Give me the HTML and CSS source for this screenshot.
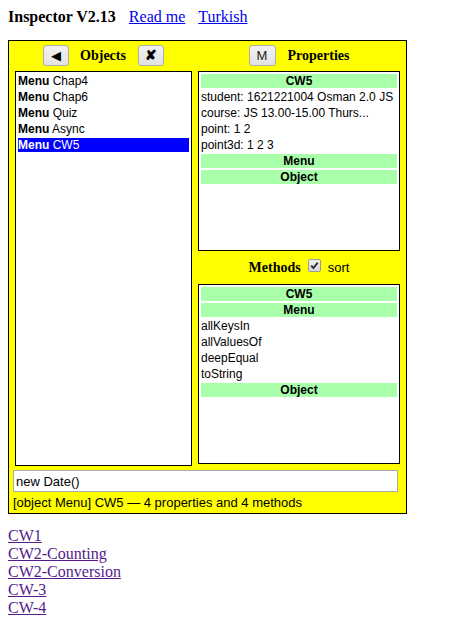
FILE: index.html
```html
<!DOCTYPE html>
<html>
<head>
<meta charset="utf-8">
<title>Inspector</title>
<link rel="stylesheet" href="styles.css">
</head>
<body>
<div class="title"><b>Inspector V2.13</b><a class="toplink" href="#">Read me</a><a class="toplink" href="#">Turkish</a></div>
<div class="inspector">
  <div class="cols">
    <div class="col">
      <div class="head">
        <button class="btn">&#9664;</button>
        <span class="htext">Objects</span>
        <button class="btn btn-x">&#10008;</button>
      </div>
      <div class="list objects">
        <div class="row"><b>Menu</b> Chap4</div>
        <div class="row"><b>Menu</b> Chap6</div>
        <div class="row"><b>Menu</b> Quiz</div>
        <div class="row"><b>Menu</b> Async</div>
        <div class="row selected"><b>Menu</b> CW5</div>
      </div>
    </div>
    <div class="col">
      <div class="head">
        <button class="btn btn-m">M</button>
        <span class="htext">Properties</span>
      </div>
      <div class="list panel">
        <div class="bar">CW5</div>
        <div class="row">student: 1621221004 Osman 2.0 JS</div>
        <div class="row">course: JS 13.00-15.00 Thurs...</div>
        <div class="row">point: 1 2</div>
        <div class="row">point3d: 1 2 3</div>
        <div class="bar">Menu</div>
        <div class="bar">Object</div>
      </div>
      <div class="head methods-head">
        <span class="htext">Methods</span>
        <span class="check"><svg width="9" height="9" viewBox="0 0 9 9"><path d="M1.2 4.6 L3.4 7 L7.8 1.6" fill="none" stroke="#333" stroke-width="1.9"/></svg></span>
        <span class="sort">sort</span>
      </div>
      <div class="list panel">
        <div class="bar">CW5</div>
        <div class="bar">Menu</div>
        <div class="row">allKeysIn</div>
        <div class="row">allValuesOf</div>
        <div class="row">deepEqual</div>
        <div class="row">toString</div>
        <div class="bar">Object</div>
      </div>
    </div>
  </div>
  <input class="cmd" type="text" value="new Date()">
  <div class="status">[object Menu] CW5 — 4 properties and 4 methods</div>
</div>
<div class="links">
  <a href="#">CW1</a>
  <a href="#">CW2-Counting</a>
  <a href="#">CW2-Conversion</a>
  <a href="#">CW-3</a>
  <a href="#">CW-4</a>
</div>
</body>
</html>
```

FILE: styles.css
```css
body {
  margin: 8px;
  font-family: "Liberation Serif", "Times New Roman", serif;
  font-size: 16px;
  color: #000;
  background: #fff;
}

.title {
  line-height: 18px;
  margin-bottom: 14px;
}

.toplink {
  color: #0000ee;
  margin-left: 13px;
}

.inspector {
  width: 399px;
  box-sizing: border-box;
  border: 1px solid #000;
  background: #ffff00;
  padding: 0 6px;
}

.cols {
  display: grid;
  grid-template-columns: 177px 202px;
  column-gap: 6px;
  align-items: start;
}

.col {
  display: flex;
  flex-direction: column;
}

.head {
  height: 30px;
  display: flex;
  align-items: center;
  justify-content: center;
  gap: 11px;
}

.htext {
  font-weight: bold;
  font-size: 14px;
}

.btn {
  font-family: "Liberation Sans", Arial, sans-serif;
  font-size: 13px;
  width: 26px;
  height: 21px;
  padding: 0;
  border: 1px solid #adadad;
  border-radius: 3px;
  background: linear-gradient(#f2f2f2, #e2e2e2);
  color: #000;
  line-height: 19px;
  margin-top: -1px;
}

.btn-x {
  font-weight: bold;
  font-size: 14px;
  margin-left: 1px;
}

.btn-m {
  width: 27px;
  color: #222;
  margin-right: 1px;
}

.list {
  box-sizing: border-box;
  border: 1px solid #000;
  background: #fff;
  padding: 2px 2px 1px;
  display: flex;
  flex-direction: column;
  gap: 2px;
  font-family: "Liberation Sans", Arial, sans-serif;
  font-size: 12px;
}

.objects {
  height: 395px;
}

.panel {
  height: 180px;
}

.row {
  height: 14px;
  line-height: 14px;
  white-space: nowrap;
  overflow: hidden;
}

.row b {
  font-weight: bold;
}

.selected {
  background: #0000ff;
  color: #fff;
}

.bar {
  height: 14px;
  line-height: 14px;
  background: #aaffaa;
  font-weight: bold;
  text-align: center;
}

.methods-head {
  height: 33px;
  gap: 0;
}

.check {
  display: inline-flex;
  align-items: center;
  justify-content: center;
  width: 11px;
  height: 11px;
  border: 1px solid #9a9a9a;
  border-radius: 2px;
  background: linear-gradient(#f0f0f0, #d6d6d6);
  margin-left: 7px;
  margin-top: -4px;
}

.sort {
  font-family: "Liberation Sans", Arial, sans-serif;
  font-size: 13px;
  margin-left: 7px;
}

.cmd {
  display: block;
  box-sizing: border-box;
  width: 385px;
  height: 22px;
  margin: 4px 0 0 -2px;
  padding: 0 2px;
  border: 1px solid #aaaaaa;
  background: #fff;
  font-family: "Liberation Sans", Arial, sans-serif;
  font-size: 13px;
  color: #000;
  outline: none;
}

.status {
  font-family: "Liberation Sans", Arial, sans-serif;
  font-size: 13px;
  line-height: 17px;
  padding: 2px 0;
  margin-left: -2px;
}

.links {
  margin-top: 13px;
  display: flex;
  flex-direction: column;
  align-items: flex-start;
}

.links a {
  color: #551a8b;
}
```
